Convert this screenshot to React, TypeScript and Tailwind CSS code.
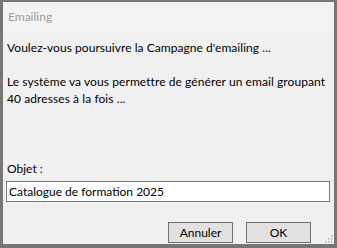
export default function App() {
	return (
		<div
			className="relative flex h-[248px] w-[337px] flex-col overflow-hidden border-t-2 border-r-[3px] border-b-4 border-l-[3px] border-[#767676] bg-[#f0f0f0] text-[12px] text-black"
			style={{ fontFamily: 'Lato, "Liberation Sans", sans-serif' }}
		>
			<div className="flex h-[29px] shrink-0 items-center bg-[#f3f3f3] pl-[5px] text-[#9a9a9a]">
				Emailing
			</div>

			<div className="flex flex-1 flex-col px-[4px] pt-[8px] leading-[17px] whitespace-nowrap">
				<p className="tracking-[0.05px]">Voulez-vous poursuivre la Campagne d'emailing ...</p>
				<p className="mt-[17px] tracking-[0.08px]">
					Le système va vous permettre de générer un email groupant
					<br />
					40 adresses à la fois ...
				</p>

				<label className="mt-[53px]">Objet :</label>
				<input
					className="mt-[4px] -ml-[1px] h-[21px] w-[324px] shrink-0 border border-[#7a7a7a] bg-white px-[2px] outline-none"
					defaultValue="Catalogue de formation 2025"
				/>

				<div className="mt-[20px] flex justify-end gap-[13px] pr-[19px]">
					<button className="h-[21px] w-[65px] border border-[#707070] bg-[#e1e1e1] text-center">
						Annuler
					</button>
					<button className="h-[21px] w-[65px] border border-[#707070] bg-[#e1e1e1] text-center">
						OK
					</button>
				</div>
			</div>

			{/* size grip */}
			<svg className="absolute right-[1px] bottom-[1px]" width="8" height="8" viewBox="0 0 8 8">
				<rect x="6" y="0" width="1.5" height="1.5" fill="#b0b0b0" />
				<rect x="3" y="3" width="1.5" height="1.5" fill="#b0b0b0" />
				<rect x="6" y="3" width="1.5" height="1.5" fill="#b0b0b0" />
				<rect x="0" y="6" width="1.5" height="1.5" fill="#b0b0b0" />
				<rect x="3" y="6" width="1.5" height="1.5" fill="#b0b0b0" />
				<rect x="6" y="6" width="1.5" height="1.5" fill="#b0b0b0" />
			</svg>
		</div>
	);
}
